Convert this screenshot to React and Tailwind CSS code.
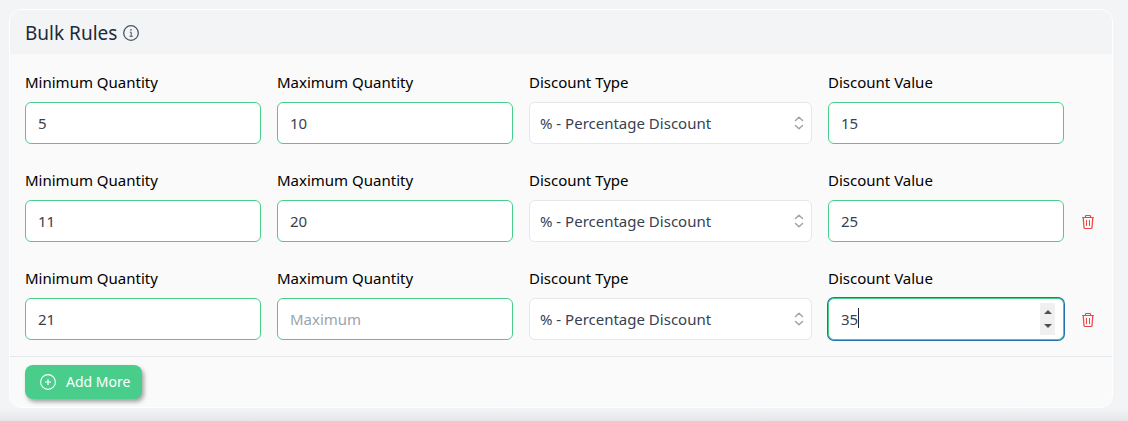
const RULES = [
	{ id: 1, min: '5', max: '10', value: '15', removable: false },
	{ id: 2, min: '11', max: '20', value: '25', removable: true },
	{ id: 3, min: '21', max: '', value: '35', removable: true, active: true },
];

const InfoIcon = () => (
	<svg className="size-4 text-[#4b5563]" viewBox="0 0 16 16" fill="none" stroke="currentColor" aria-hidden="true">
		<circle cx="8" cy="8" r="7.3" strokeWidth="1.3" />
		<path d="M6.8 7.2H8.2V11.2M6.6 11.3H9.8" strokeWidth="1" />
		<circle cx="8" cy="4.9" r="0.8" fill="currentColor" stroke="none" />
	</svg>
);

const PlusIcon = () => (
	<svg className="size-4" viewBox="0 0 16 16" fill="none" stroke="currentColor" aria-hidden="true">
		<circle cx="8" cy="8" r="7.4" strokeWidth="1.1" />
		<path d="M8 5V11M5 8H11" strokeWidth="1.2" />
	</svg>
);

const TrashIcon = () => (
	<svg className="size-4" viewBox="0 0 16 16" fill="none" stroke="currentColor" strokeLinejoin="round" aria-hidden="true">
		<path d="M2.2 3.5H13.8M5.5 3.3V2.2Q5.5 1.5 6.2 1.5H9.8Q10.5 1.5 10.5 2.2V3.3" strokeWidth="1.2" />
		<path d="M3.2 3.6L4 13.6Q4.1 14.5 5 14.5H11Q11.9 14.5 12 13.6L12.8 3.6" strokeWidth="1.2" />
		<path d="M6.5 6V12M9.5 6V12" strokeWidth="1" />
	</svg>
);

const SelectorIcon = () => (
	<svg
		className="pointer-events-none absolute right-2 top-[13px] h-4 w-2.5 text-[#9ca3af]"
		viewBox="0 0 10 16"
		fill="none"
		stroke="currentColor"
		strokeWidth="1.5"
		strokeLinecap="round"
		strokeLinejoin="round"
		aria-hidden="true"
	>
		<path d="M1.5 5.5L5 2.3L8.5 5.5M1.5 10.5L5 13.7L8.5 10.5" />
	</svg>
);

const labelClass = 'block leading-6 text-black mb-2';
const inputClass =
	'block w-full h-[42px] rounded-md border border-[#49cd8b] bg-white px-3 text-[#374151] placeholder:text-[#9ca3af] outline-none [appearance:textfield]';
const activeClass = 'ring-1 ring-[#2271b1]';

const NumberField = ( { id, label, value, placeholder, active } ) => (
	<div>
		<label htmlFor={ id } className={ labelClass }>{ label }</label>
		<div className="relative">
			<input
				id={ id }
				type="number"
				defaultValue={ value }
				placeholder={ placeholder }
				className={ active ? `${ inputClass } ${ activeClass }` : inputClass }
			/>
			{ active && (
				<>
					{/* Text caret */}
					<span className="absolute left-[30px] top-[10px] h-5 w-px bg-gray-800" />
					{/* Stepper */}
					<span className="absolute right-[9px] top-[5px] flex h-8 w-[15px] flex-col items-center justify-center gap-2.5 bg-[#f0f0f0]">
						<svg className="h-1 w-2" viewBox="0 0 8 4" fill="#505050" aria-hidden="true">
							<path d="M0 4L4 0L8 4Z" />
						</svg>
						<svg className="h-1 w-2" viewBox="0 0 8 4" fill="#505050" aria-hidden="true">
							<path d="M0 0L4 4L8 0Z" />
						</svg>
					</span>
				</>
			) }
		</div>
	</div>
);

const RuleRow = ( { rule } ) => (
	<div className="grid grid-cols-[236fr_236fr_283fr_236fr_17px] gap-x-4">
		<NumberField id={ `min-${ rule.id }` } label="Minimum Quantity" value={ rule.min } placeholder="Minimum" />
		<NumberField id={ `max-${ rule.id }` } label="Maximum Quantity" value={ rule.max } placeholder="Maximum" />
		<div>
			<label htmlFor={ `type-${ rule.id }` } className={ labelClass }>Discount Type</label>
			<div className="relative">
				<select
					id={ `type-${ rule.id }` }
					className="block h-[42px] w-full appearance-none rounded-md border border-gray-200 bg-white pl-2.5 pr-8 text-[#374151] outline-none"
				>
					<option>% - Percentage Discount</option>
				</select>
				<SelectorIcon />
			</div>
		</div>
		<NumberField id={ `value-${ rule.id }` } label="Discount Value" value={ rule.value } active={ rule.active } />
		<div className="flex items-end pb-3">
			{ rule.removable && (
				<button type="button" aria-label="Remove rule" className="text-[#ef4444]">
					<TrashIcon />
				</button>
			) }
		</div>
	</div>
);

const App = () => {
	return (
		<div className="bg-gray-100 pt-[9px] font-['Noto_Sans',sans-serif] text-[15px]">
			<section className="ml-[9px] mr-[15px] overflow-hidden rounded-xl border border-white bg-[#fafafa]">
				<header className="flex h-11 items-center gap-1.5 bg-gray-100 px-[15px] pt-0.5">
					<h2 className="text-[19px] leading-7 text-gray-800">Bulk Rules</h2>
					<InfoIcon />
				</header>

				<div className="flex flex-col gap-6 px-[15px] pb-4 pt-4">
					{ RULES.map( ( rule ) => (
						<RuleRow key={ rule.id } rule={ rule } />
					) ) }
				</div>

				<footer className="border-t border-gray-200 px-[15px] py-2">
					<button
						type="button"
						className="flex h-[34px] items-center gap-2.5 rounded-lg bg-[#49cd8b] pl-[15px] pr-3 text-sm text-white shadow-[2px_3px_4px_rgba(0,0,0,0.35)]"
					>
						<PlusIcon />
						Add More
					</button>
				</footer>
			</section>
			<div className="h-[13px] bg-linear-to-b from-gray-100 to-[#e5e6e8]" />
		</div>
	);
};

export default App;
